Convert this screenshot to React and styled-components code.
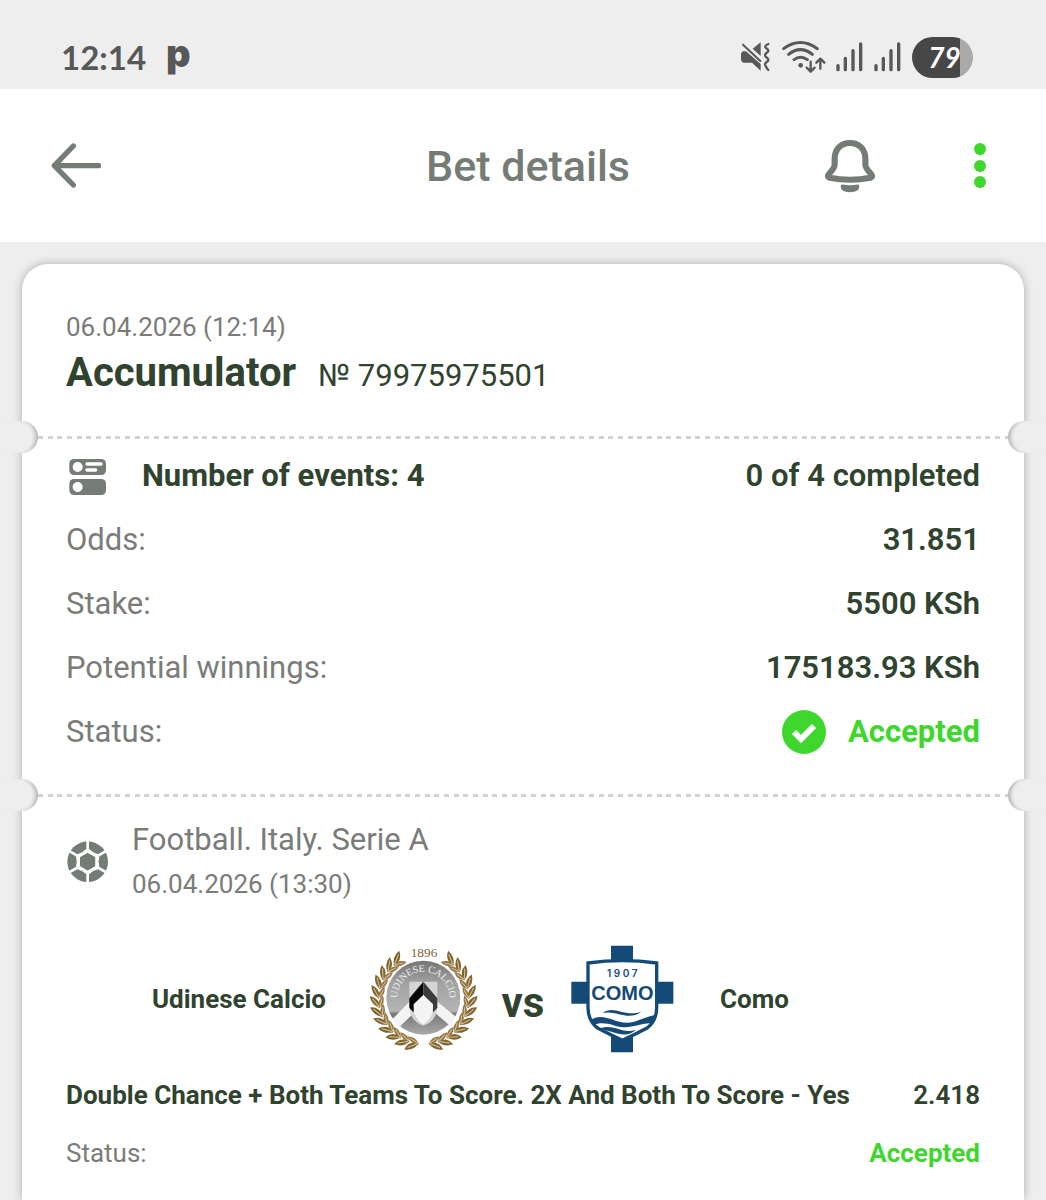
import React from "react";
import styled, { createGlobalStyle } from "styled-components";

const GlobalStyle = createGlobalStyle`
  * {
    box-sizing: border-box;
  }

  body {
    margin: 0;
    background-color: #eeeeee;
    font-family: Roboto, sans-serif;
    color: #2f432f;
  }
`;

const Page = styled.div`
  display: flex;
  flex-direction: column;
  min-height: 100vh;
  overflow: hidden;
`;

const StatusBar = styled.div`
  display: flex;
  align-items: center;
  justify-content: space-between;
  height: 89px;
  padding: 25px 73px 0 61px;
  color: #585858;
`;

const StatusGroup = styled.div`
  display: flex;
  align-items: center;
  gap: ${(props) => props.$gap}px;
`;

const Clock = styled.span`
  font-family: Lato, sans-serif;
  font-size: 33px;
  font-weight: 700;
  line-height: 40px;
`;

const AppBadge = styled.span`
  font-family: Inter, sans-serif;
  font-size: 38px;
  font-weight: 900;
  line-height: 40px;
  padding-bottom: 8px;
`;

const Battery = styled.div`
  width: 61px;
  height: 41px;
  padding-left: 4px;
  border-radius: 21px;
  background: linear-gradient(to right, #474747 48px, #aaaaaa 48px);
  color: #fff;
  font-family: Lato, sans-serif;
  font-size: 28px;
  font-style: italic;
  font-weight: 700;
  line-height: 41px;
  text-align: center;
`;

const Header = styled.header`
  display: grid;
  grid-template-columns: 1fr auto 1fr;
  align-items: center;
  height: 153px;
  padding: 0 41px 0 51px;
  background-color: #fff;
`;

const HeaderTitle = styled.h1`
  margin: 0;
  color: #757c75;
  font-size: 43px;
  font-weight: 500;
  line-height: 52px;
`;

const HeaderActions = styled.div`
  display: flex;
  justify-content: flex-end;
  gap: 80px;
`;

const IconButton = styled.button`
  display: flex;
  align-items: center;
  justify-content: center;
  width: 50px;
  height: 56px;
  padding: 0;
  border: none;
  background: none;
  cursor: pointer;
`;

const Card = styled.main`
  flex: 1;
  margin: 22px 22px 0;
  border-radius: 26px 26px 0 0;
  background-color: #fff;
  box-shadow: 0 0 10px rgba(0, 0, 0, 0.28);
`;

const Section = styled.section`
  padding: ${(props) => props.$top}px 44px ${(props) => props.$bottom}px;
`;

const TearLine = styled.div`
  display: flex;
  align-items: center;
  margin: 0 -22px;
`;

const Notch = styled.div`
  width: 38px;
  height: 32px;
  border-radius: ${(props) => (props.$right ? "16px 0 0 16px" : "0 16px 16px 0")};
  background-color: #eeeeee;
  box-shadow: inset ${(props) => (props.$right ? "5px" : "-5px")} 0 4px -3px
    rgba(0, 0, 0, 0.28);
`;

const Dashes = styled.div`
  flex: 1;
  height: 3px;
  background: repeating-linear-gradient(
    to right,
    #d2d2ce 0 5px,
    transparent 5px 10px,
    #d2d2ce 10px 15px,
    transparent 15px 19px,
    #d2d2ce 19px 24px,
    transparent 24px 29px
  );
`;

const DateText = styled.div`
  color: #7a7c7a;
  font-size: 26px;
  line-height: 30px;
`;

const BetTitle = styled.div`
  display: flex;
  align-items: baseline;
  gap: 22px;
  margin-top: 7px;
`;

const BetType = styled.h2`
  margin: 0;
  font-size: 40px;
  font-weight: 700;
  line-height: 48px;
`;

const BetNumber = styled.span`
  font-size: 31px;
`;

const Rows = styled.div`
  display: flex;
  flex-direction: column;
  gap: 24px;
`;

const Row = styled.div`
  display: flex;
  align-items: center;
  justify-content: space-between;
  font-size: 31px;
  line-height: 40px;
`;

const Label = styled.span`
  color: #7a7c7a;
`;

const Value = styled.span`
  display: flex;
  align-items: center;
  gap: ${(props) => props.$gap || 0}px;
  color: ${(props) => (props.$accepted ? "#3fd72d" : "#2f432f")};
  font-weight: ${(props) => props.$weight || 600};
`;

const StatusMark = styled.svg`
  width: 44px;
  height: 44px;
  margin: -2px 0;
`;

const League = styled.div`
  display: flex;
  align-items: center;
  gap: 24px;
`;

const LeagueText = styled.div`
  display: flex;
  flex-direction: column;
  gap: 11px;
`;

const LeagueName = styled.div`
  color: #7a7c7a;
  font-size: 31px;
  line-height: 36px;
`;

const Teams = styled.div`
  display: grid;
  grid-template-columns: 1fr 108px 90px 108px 1fr;
  align-items: center;
  margin-top: 46px;
`;

const TeamName = styled.span`
  padding: 0 44px;
  font-size: 26px;
  font-weight: 700;
  text-align: ${(props) => props.$align};
`;

const Versus = styled.span`
  padding-top: 8px;
  font-size: 42px;
  font-weight: 700;
  line-height: 48px;
  text-align: center;
`;

const SmallRow = styled(Row)`
  margin-top: 26px;
  font-size: 26px;
  line-height: 32px;
`;

function MutedIcon() {
  return (
    <svg width="32" height="40" viewBox="60 51 96 120" aria-hidden="true">
      <path d="M98 86l24-19v41z" fill="#585858" />
      <path d="M78 94l44 38v20l-26-24H70q-7-3-7-10v-14q0-9 8-10z" fill="#585858" />
      <path d="M69 74l52 49" stroke="#585858" strokeWidth="6" strokeLinecap="round" />
      <path
        d="M145 72q-13 6-8 11 12 8 6 13-12 8-6 14 12 8 6 14-12 8-6 14 3 7 8 12"
        fill="none"
        stroke="#585858"
        strokeWidth="7"
        strokeLinecap="round"
      />
    </svg>
  );
}

function WifiIcon() {
  return (
    <svg width="44" height="40" viewBox="189 51 132 120" aria-hidden="true">
      <g fill="none" stroke="#585858" strokeWidth="9" strokeLinecap="round" strokeLinejoin="round">
        <path d="M194 86q50-37 101 0M209 103q35-28 71 0M225 119q20-15 40 0" />
        <path
          d="M275 125v29m-12-11l12 12 12-12M304 146v-29m-12 11l12-12 12 12"
          strokeWidth="7"
        />
      </g>
      <circle cx="245" cy="136" r="7" fill="#585858" />
    </svg>
  );
}

function SignalIcon() {
  return (
    <svg width="28" height="40" viewBox="347 51 84 120" aria-hidden="true">
      <path
        d="M353 137v12M375 115v34M398 92v57M421 72v77"
        stroke="#585858"
        strokeWidth="10"
        strokeLinecap="round"
      />
    </svg>
  );
}

function BackIcon() {
  return (
    <svg width="50" height="50" viewBox="63 63 150 150" aria-hidden="true">
      <path
        d="M206 137H74M130 78L73 137l57 58"
        fill="none"
        stroke="#757c75"
        strokeWidth="16"
        strokeLinecap="round"
        strokeLinejoin="round"
      />
    </svg>
  );
}

function BellIcon() {
  return (
    <svg width="52" height="56" viewBox="71 54 156 168" aria-hidden="true">
      <path
        d="M149 66c-29 0-48 21-48 50v18c0 14-19 27-21 35 0 4 2 5 5 6 42 8 86 8 128 0 3-1 5-2 5-6-2-8-21-21-21-35v-18c0-29-19-50-48-50z"
        fill="none"
        stroke="#757c75"
        strokeWidth="19"
        strokeLinejoin="round"
      />
      <path
        d="M124 196q25 4 50 0 4 0 4 7 0 17-29 17t-29-17q0-7 4-7z"
        fill="#757c75"
      />
    </svg>
  );
}

function MoreIcon() {
  return (
    <svg width="12" height="48" viewBox="0 0 12 48" aria-hidden="true">
      <g fill="#3fd72d">
        <circle cx="6" cy="7" r="6" />
        <circle cx="6" cy="24" r="6" />
        <circle cx="6" cy="40" r="6" />
      </g>
    </svg>
  );
}

function EventsIcon() {
  return (
    <svg width="40" height="40" viewBox="48 48 120 120" aria-hidden="true">
      <rect x="58" y="57" width="110" height="48" rx="14" fill="#757c75" />
      <rect x="58" y="117" width="110" height="48" rx="14" fill="#757c75" />
      <g fill="#fff">
        <circle cx="83" cy="81" r="15" />
        <circle cx="83" cy="141" r="15" />
        <rect x="106" y="67" width="52" height="10" rx="5" />
        <rect x="106" y="85" width="36" height="10" rx="5" />
      </g>
    </svg>
  );
}

function BallIcon() {
  return (
    <svg width="42" height="42" viewBox="-65 -65 126 126" aria-hidden="true">
      <circle r="61" fill="#757c75" />
      <path d="M0-34L29-17V17L0 34-29 17V-17z" fill="#fff" />
      <path d="M0-27L23-14V14L0 27-23 14V-14z" fill="#757c75" />
      {[0, 60, 120, 180, 240, 300].map((angle) => (
        <path
          key={angle}
          d="M-4-63H4V-38L16-29 14-20 0-27-14-20-16-29-4-38z"
          fill="#fff"
          transform={`rotate(${angle})`}
        />
      ))}
    </svg>
  );
}

function AcceptedIcon() {
  return (
    <StatusMark viewBox="0 0 44 44" aria-hidden="true">
      <circle cx="22" cy="22" r="22" fill="#3fd72d" />
      <path d="M12 22l7 7 13-13" fill="none" stroke="#fff" strokeWidth="6" />
    </StatusMark>
  );
}

const leafAngles = [34, 46, 58, 70, 82, 94, 106, 118, 130, 142, 154, 166];

function UdineseLogo() {
  return (
    <svg width="108" height="108" viewBox="30 30 324 324" role="img" aria-label="Udinese Calcio logo">
      <defs>
        <linearGradient id="ball" x1="0" y1="0" x2="0" y2="1">
          <stop offset="0" stopColor="#747474" />
          <stop offset="0.3" stopColor="#a2a2a2" />
          <stop offset="0.68" stopColor="#b4b4b4" />
          <stop offset="0.72" stopColor="#777" />
          <stop offset="1" stopColor="#aaa" />
        </linearGradient>
        <path id="arc" d="M116 213a78 78 0 1 1 148 0" />
      </defs>
      {[1, -1].map((side) => (
        <g key={side} transform={`translate(191 192) scale(${side} 1)`}>
          {leafAngles.map((angle) => (
            <g key={angle} transform={`rotate(${angle}) translate(0 -136)`}>
              <path d="M18 4Q8-22-20-25-14 4 18 4z" fill="#80642f" />
              <path d="M18 0Q-2-6-20 15 6 22 18 0z" fill="#947543" />
              <path d="M14 1L-12-17M14 3L-10 12" stroke="#d9c59b" strokeWidth="3" />
            </g>
          ))}
        </g>
      ))}
      <circle cx="190" cy="188" r="111" fill="url(#ball)" />
      <path d="M148 200l-50 52 20 24 54-52zM232 200l54 44-14 30-58-50z" fill="#f4f4f4" />
      <path d="M148 140h84v72q0 46-42 60-42-14-42-60z" fill="#d4d4d4" />
      <path d="M190 140l-42 50v28l12 14 6-28 24-24z" fill="#050505" />
      <path d="M190 140l42 50v28l-12 14-6-28-24-24z" fill="#3c3c3c" />
      <path d="M190 180l29 28q2 42-29 60-31-18-29-60z" fill="#f4f4f4" />
      <text fill="#eeeeee" fontFamily="Liberation Serif, serif" fontSize="30">
        <textPath href="#arc" startOffset="50%" textAnchor="middle">
          UDINESE CALCIO
        </textPath>
      </text>
      <text
        x="192"
        y="66"
        fill="#7d6233"
        fontFamily="Liberation Serif, serif"
        fontSize="40"
        textAnchor="middle"
      >
        1896
      </text>
    </svg>
  );
}

function ComoLogo() {
  return (
    <svg width="108" height="108" viewBox="234 30 324 324" role="img" aria-label="Como logo">
      <path d="M363 32h66v320h-66zM244 140h306v66H244z" fill="#144a78" />
      <path
        d="M294 84q103-14 206 0v134q0 40-30 62-34 18-73 36-39-18-73-36-30-22-30-62z"
        fill="#fff"
        stroke="#144a78"
        strokeWidth="10"
      />
      <g fill="#144a78">
        <path d="M338 234c34-26 64 14 116-4-40 30-74-6-116 4z" />
        <path d="M303 254c46-26 76 22 130 6q36-14 62-20l-12 24c-48 4-62 20-108 8-28-8-44-10-66-2z" />
        <path d="M326 282c46-20 70 18 112 2-34 32-66 2-112-2z" />
      </g>
      <text
        x="397"
        y="126"
        fill="#144a78"
        fontFamily="Inter, sans-serif"
        fontSize="30"
        fontWeight="600"
        textAnchor="middle"
      >
        1 9 0 7
      </text>
      <text
        x="397"
        y="196"
        fill="#144a78"
        fontFamily="Liberation Sans, sans-serif"
        fontSize="60"
        fontWeight="700"
        textAnchor="middle"
      >
        COMO
      </text>
    </svg>
  );
}

const details = [
  { label: "Odds:", value: "31.851" },
  { label: "Stake:", value: "5500 KSh" },
  { label: "Potential winnings:", value: "175183.93 KSh" },
];

function App() {
  return (
    <>
      <GlobalStyle />
      <Page>
        <StatusBar>
          <StatusGroup $gap={20}>
            <Clock>12:14</Clock>
            <AppBadge>p</AppBadge>
          </StatusGroup>
          <StatusGroup $gap={10}>
            <MutedIcon />
            <WifiIcon />
            <SignalIcon />
            <SignalIcon />
            <Battery>79</Battery>
          </StatusGroup>
        </StatusBar>

        <Header>
          <IconButton aria-label="Back">
            <BackIcon />
          </IconButton>
          <HeaderTitle>Bet details</HeaderTitle>
          <HeaderActions>
            <IconButton aria-label="Notifications">
              <BellIcon />
            </IconButton>
            <IconButton aria-label="More options">
              <MoreIcon />
            </IconButton>
          </HeaderActions>
        </Header>

        <Card>
          <Section $top={48} $bottom={24}>
            <DateText>06.04.2026 (12:14)</DateText>
            <BetTitle>
              <BetType>Accumulator</BetType>
              <BetNumber>№ 79975975501</BetNumber>
            </BetTitle>
          </Section>

          <TearLine>
            <Notch />
            <Dashes />
            <Notch $right />
          </TearLine>

          <Section $top={3} $bottom={27}>
            <Rows>
              <Row>
                <Value $gap={36} $weight={700}>
                  <EventsIcon />
                  Number of events: 4
                </Value>
                <Value>0 of 4 completed</Value>
              </Row>
              {details.map((item) => (
                <Row key={item.label}>
                  <Label>{item.label}</Label>
                  <Value>{item.value}</Value>
                </Row>
              ))}
              <Row>
                <Label>Status:</Label>
                <Value $accepted $gap={22} $weight={700}>
                  <AcceptedIcon />
                  Accepted
                </Value>
              </Row>
            </Rows>
          </Section>

          <TearLine>
            <Notch />
            <Dashes />
            <Notch $right />
          </TearLine>

          <Section $top={11} $bottom={24}>
            <League>
              <BallIcon />
              <LeagueText>
                <LeagueName>Football. Italy. Serie A</LeagueName>
                <DateText>06.04.2026 (13:30)</DateText>
              </LeagueText>
            </League>
            <Teams>
              <TeamName $align="right">Udinese Calcio</TeamName>
              <UdineseLogo />
              <Versus>vs</Versus>
              <ComoLogo />
              <TeamName $align="left">Como</TeamName>
            </Teams>
            <SmallRow>
              <Value $weight={700}>Double Chance + Both Teams To Score. 2X And Both To Score - Yes</Value>
              <Value>2.418</Value>
            </SmallRow>
            <SmallRow>
              <Label>Status:</Label>
              <Value $accepted $weight={700}>Accepted</Value>
            </SmallRow>
          </Section>
        </Card>
      </Page>
    </>
  );
}

export default App;
